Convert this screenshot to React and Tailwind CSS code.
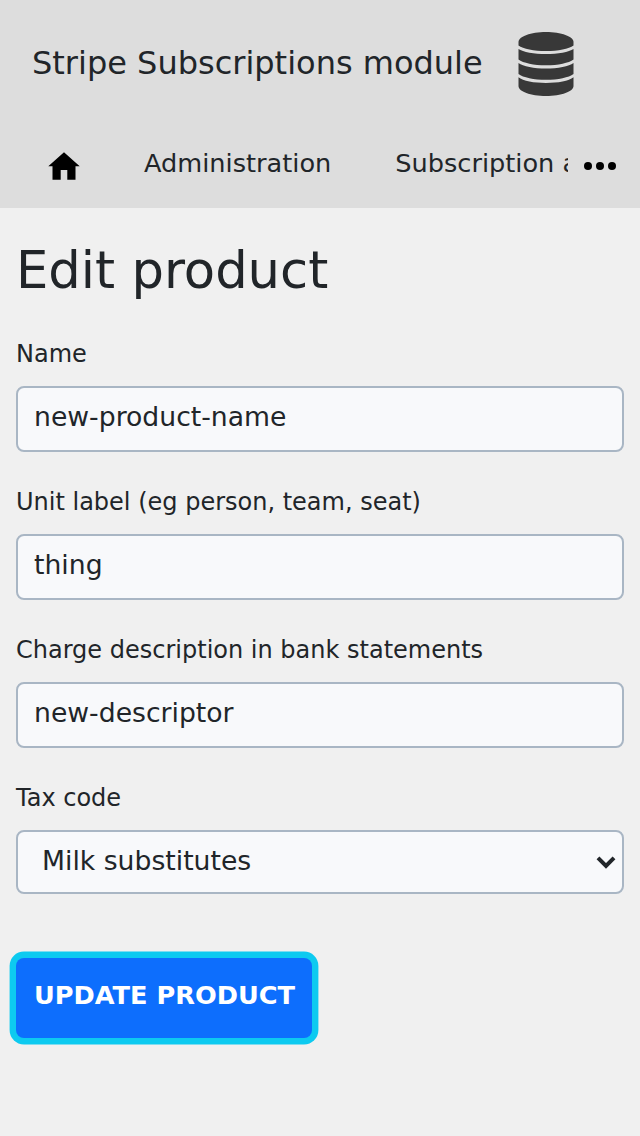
import React from "react";

function DatabaseIcon() {
  return (
    <svg className="ml-[35px] mt-8 h-16 w-14 shrink-0" viewBox="0 0 56 64" fill="#383838">
      <path d="M.5 10C.5 4.500 12.800 0 28 0s27.500 4.500 27.500 10v3.500C51 17 40 19 28 19S5 17 .5 13.500Z" />
      <path d="M.5 17C5 20 16 22 28 22s23-2 27.500-5V27.500C51 31 40 33.300 28 33.300S5 31 .5 27.500Z" />
      <path d="M.5 31C5 34.500 16 36.500 28 36.500s23-2 27.500-5.500V42C51 45.500 40 47.800 28 47.800S5 45.500 .5 42Z" />
      <path d="M.5 45.300C5 49 16 51 28 51s23-2 27.500-5.700V54c0 5.500-12 10-27.500 10S.5 59.500 .5 54Z" />
    </svg>
  );
}

function Field({ label, value }) {
  return (
    <label className="mb-8 block">
      <span className="block h-9 text-[24px] leading-9">{label}</span>
      <input
        className="mt-[14px] block h-[66px] w-full rounded-lg border-2 border-[#a9b6c4] bg-[#f8f9fb] px-4 pb-[6px] text-[26.667px] outline-none"
        defaultValue={value}
      />
    </label>
  );
}

export default function App() {
  return (
    <div className="min-h-[1136px] w-full overflow-hidden bg-[#f0f0f0] font-['DejaVu_Sans',sans-serif] text-[#212529]">
      <header className="h-52 bg-[#dddddd]">
        <div className="flex h-32 pl-8">
          <div className="whitespace-nowrap pt-[39px] text-[32px] leading-[48px]">Stripe Subscriptions module</div>
          <DatabaseIcon />
        </div>
        <nav className="flex h-20">
          <div className="flex w-[568px] overflow-hidden whitespace-nowrap text-[25.6px] leading-[38px]">
            <a className="w-36 shrink-0 pl-12 pt-6">
              <svg className="h-7 w-8" viewBox="0 0 32 28">
                <path d="M16 .3 31.700 14.300H27.500V27.700H19.300V18H12.700V27.700H4.500V14.300H.3Z" />
              </svg>
            </a>
            <a className="shrink-0 pt-4">Administration</a>
            <a className="ml-16 shrink-0 pt-4">Subscription administration</a>
          </div>
          <svg className="ml-4 mt-[34px] h-2 w-8" viewBox="0 0 32 8">
            <circle cx="4" cy="4" r="4" />
            <circle cx="16" cy="4" r="4" />
            <circle cx="28" cy="4" r="4" />
          </svg>
        </nav>
      </header>
      <main className="px-4">
        <h1 className="pt-8 text-[51.2px] leading-[61px]">Edit product</h1>
        <form className="pt-[35px]">
          <Field label="Name" value="new-product-name" />
          <Field label="Unit label (eg person, team, seat)" value="thing" />
          <Field label="Charge description in bank statements" value="new-descriptor" />
          <div className="h-9 text-[24px] leading-9">Tax code</div>
          <div className="mt-[14px] flex h-16 items-center justify-between rounded-lg border-2 border-[#a9b6c4] bg-[#f8f9fb] pl-6 pr-[6px] text-[26.667px]">
            <span className="pb-[2px]">Milk substitutes</span>
            <svg className="h-5 w-5" viewBox="0 0 20 20" fill="none" stroke="#212529" strokeWidth="4">
              <path d="m2 5.800 8 8 8-8" />
            </svg>
          </div>
          <button
            type="button"
            className="mt-16 flex h-20 w-[296px] items-center whitespace-nowrap rounded-lg bg-[#0d6efd] pb-[6px] pl-[18px] text-[25.6px] font-bold text-white shadow-[0_0_0_6.4px_#0dcaf0]"
          >
            UPDATE PRODUCT
          </button>
        </form>
      </main>
    </div>
  );
}
